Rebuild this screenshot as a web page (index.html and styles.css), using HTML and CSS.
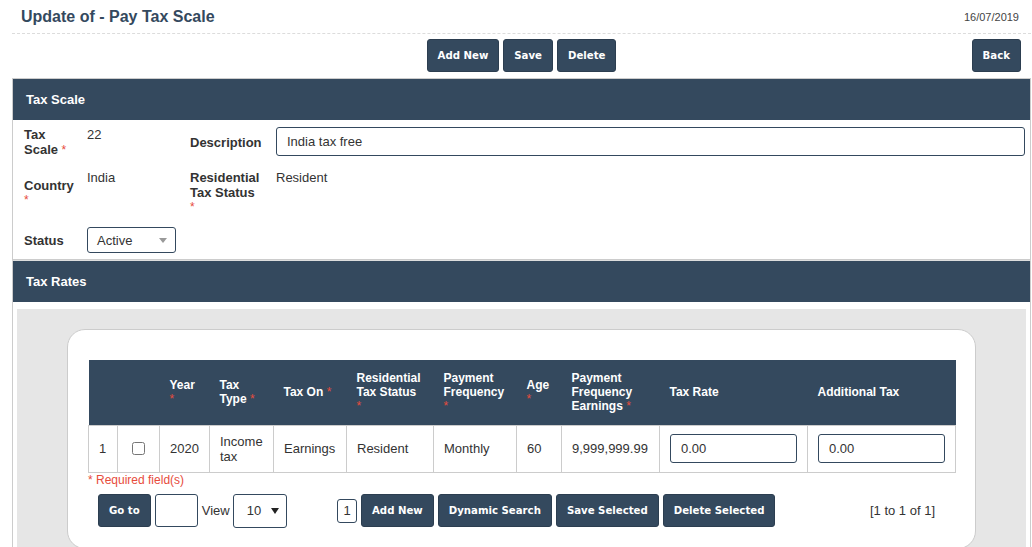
FILE: index.html
```html
<html>

<head>
    <link rel="stylesheet" href="styles.css">
</head>

<body>
    <div class="page">
        <div class="topbar">
            <h1 class="title">Update of - Pay Tax Scale</h1>
            <span class="date">16/07/2019</span>
        </div>
        <div class="actions">
            <div class="actionsCenter">
                <button class="btn">Add New</button>
                <button class="btn">Save</button>
                <button class="btn">Delete</button>
            </div>
            <button class="btn back">Back</button>
        </div>

        <div class="panel">
            <div class="panelHead">Tax Scale</div>
            <div class="panelBody formGrid">
                <div class="label short">Tax Scale <span class="req">*</span></div>
                <div class="value">22</div>
                <div class="label wide">Description</div>
                <div class="value"><input class="textInput" value="India tax free" /></div>

                <div class="label short">Country <span class="req">*</span></div>
                <div class="value">India</div>
                <div class="label wide">Residential Tax Status <span class="req">*</span></div>
                <div class="value">Resident</div>

                <div class="label short">Status</div>
                <div class="value">
                    <div class="select statusSelect"><span>Active</span><i class="arrow grey"></i></div>
                </div>
            </div>
        </div>

        <div class="panel second">
            <div class="panelHead">Tax Rates</div>
            <div class="panelBody rates">
                <div class="well">
                    <div class="card">
                        <table class="grid">
                            <colgroup>
                                <col style="width: 29px">
                                <col style="width: 42px">
                                <col style="width: 50px">
                                <col style="width: 64px">
                                <col style="width: 73px">
                                <col style="width: 87px">
                                <col style="width: 83px">
                                <col style="width: 45px">
                                <col style="width: 98px">
                                <col style="width: 148px">
                                <col style="width: 148px">
                            </colgroup>
                            <thead>
                                <tr>
                                    <th></th>
                                    <th></th>
                                    <th>Year <span class="req">*</span></th>
                                    <th>Tax Type <span class="req">*</span></th>
                                    <th>Tax On <span class="req">*</span></th>
                                    <th>Residential Tax Status <span class="req">*</span></th>
                                    <th>Payment Frequency <span class="req">*</span></th>
                                    <th>Age <span class="req">*</span></th>
                                    <th>Payment Frequency Earnings <span class="req">*</span></th>
                                    <th>Tax Rate</th>
                                    <th>Additional Tax</th>
                                </tr>
                            </thead>
                            <tbody>
                                <tr>
                                    <td>1</td>
                                    <td class="center"><input type="checkbox" /></td>
                                    <td>2020</td>
                                    <td>Income tax</td>
                                    <td>Earnings</td>
                                    <td>Resident</td>
                                    <td>Monthly</td>
                                    <td>60</td>
                                    <td>9,999,999.99</td>
                                    <td><input class="textInput" value="0.00" /></td>
                                    <td><input class="textInput" value="0.00" /></td>
                                </tr>
                            </tbody>
                        </table>
                        <div class="required">* Required field(s)</div>
                        <div class="pager">
                            <div class="pagerLeft">
                                <button class="btn">Go to</button>
                                <input class="gotoInput" />
                                <span class="viewLabel">View</span>
                                <div class="select viewSelect"><span>10</span><i class="arrow"></i></div>
                            </div>
                            <div class="pagerMid">
                                <span class="pageBox">1</span>
                                <button class="btn">Add New</button>
                                <button class="btn">Dynamic Search</button>
                                <button class="btn">Save Selected</button>
                                <button class="btn">Delete Selected</button>
                            </div>
                            <div class="pagerInfo">[1 to 1 of 1]</div>
                        </div>
                    </div>
                </div>
            </div>
        </div>
    </div>
</body>

</html>
```

FILE: styles.css
```css
body {
    margin: 0;
    font-family: "Liberation Sans", Arial, sans-serif;
    font-size: 13px;
    color: #333;
    background: #fff;
}

.page {
    padding: 0 1px 0 12px;
}

.topbar {
    display: flex;
    justify-content: space-between;
    align-items: center;
    height: 33px;
    padding: 0 12px 0 9px;
    border-bottom: 1px dashed #dcdcdc;
}

.title {
    margin: 0;
    font-size: 16px;
    font-weight: bold;
    color: #34495e;
}

.date {
    font-size: 11px;
    color: #444;
}

.actions {
    display: grid;
    grid-template-columns: 1fr auto 1fr;
    padding: 5px 10px 6px 10px;
}

.actionsCenter {
    grid-column: 2;
    display: flex;
    gap: 4px;
}

.back {
    grid-column: 3;
    justify-self: end;
}

.btn {
    height: 33px;
    padding: 0 10px;
    background: #34495e;
    border: 1px solid #2c3e50;
    border-radius: 3px;
    color: #fff;
    font-family: "DejaVu Sans Condensed", "DejaVu Sans", sans-serif;
    font-weight: bold;
    font-size: 11.3px;
}

.panel {
    border: 1px solid #ccc;
}

.panel.second {
    border-top-color: #ddd;
}

.panelHead {
    height: 41px;
    line-height: 41px;
    padding-left: 13px;
    background: #34495e;
    color: #fff;
    font-weight: bold;
    font-size: 13px;
}

.formGrid {
    display: grid;
    grid-template-columns: 63px 103px 86px 1fr;
    row-gap: 12px;
    padding: 7px 5px 6px 11px;
}

.label {
    align-self: center;
    font-weight: bold;
    line-height: 15px;
}

.label.short {
    width: 54px;
}

.label.wide {
    width: 73px;
}

.value {
    align-self: start;
    line-height: 15px;
}

.req {
    color: #e74c3c;
    font-weight: normal;
    font-size: 12px;
}

.textInput {
    box-sizing: border-box;
    width: 100%;
    height: 29px;
    padding: 0 10px;
    border: 1px solid #34495e;
    border-radius: 3px;
    font-family: "Liberation Sans", Arial, sans-serif;
    font-size: 13px;
    color: #333;
}

.select {
    box-sizing: border-box;
    display: flex;
    align-items: center;
    justify-content: space-between;
    border: 1px solid #34495e;
    border-radius: 3px;
    background: #fff;
}

.statusSelect {
    width: 89px;
    height: 26px;
    padding: 0 8px 0 9px;
}

.viewSelect {
    width: 54px;
    height: 34px;
    padding: 0 7px 0 13px;
}

.arrow {
    width: 0;
    height: 0;
    border-left: 4px solid transparent;
    border-right: 4px solid transparent;
    border-top: 6px solid #222;
}

.arrow.grey {
    border-top: 5px solid #999;
}

.rates {
    padding: 7px 4px 0 4px;
}

.well {
    background: #e6e6e6;
    padding: 20px 50px 0 50px;
}

.card {
    background: #fff;
    border: 1px solid #ccc;
    border-radius: 18px;
    padding: 30px 20px 20px 20px;
}

.grid {
    table-layout: fixed;
    width: 867px;
    border-collapse: collapse;
    font-size: 13px;
    color: #333;
}

.grid th {
    height: 65px;
    padding: 0 10px 0 10px;
    background: #34495e;
    color: #fff;
    font-size: 12px;
    font-weight: bold;
    line-height: 14px;
    text-align: left;
    vertical-align: middle;
}

.grid td {
    height: 30px;
    padding: 8px 10px;
    border: 1px solid #ccc;
    font-size: 13px;
    line-height: 15px;
    vertical-align: middle;
}

.grid td.center {
    text-align: center;
}

.grid input[type=checkbox] {
    margin: 0;
    vertical-align: middle;
}

.required {
    font-size: 12px;
    color: #e74c3c;
}

.pager {
    display: grid;
    grid-template-columns: 239px 1fr auto;
    align-items: center;
    margin-top: 7px;
    padding: 0 20px 0 10px;
}

.pagerLeft,
.pagerMid {
    display: flex;
    align-items: center;
    gap: 4px;
}

.gotoInput {
    box-sizing: border-box;
    width: 43px;
    height: 33px;
    border: 1px solid #34495e;
    border-radius: 3px;
}

.viewLabel {
    margin-right: -1px;
}

.pageBox {
    box-sizing: border-box;
    width: 20px;
    height: 24px;
    line-height: 22px;
    text-align: center;
    border: 1px solid #34495e;
    border-radius: 3px;
}

.pagerInfo {
    font-size: 13px;
}
```
